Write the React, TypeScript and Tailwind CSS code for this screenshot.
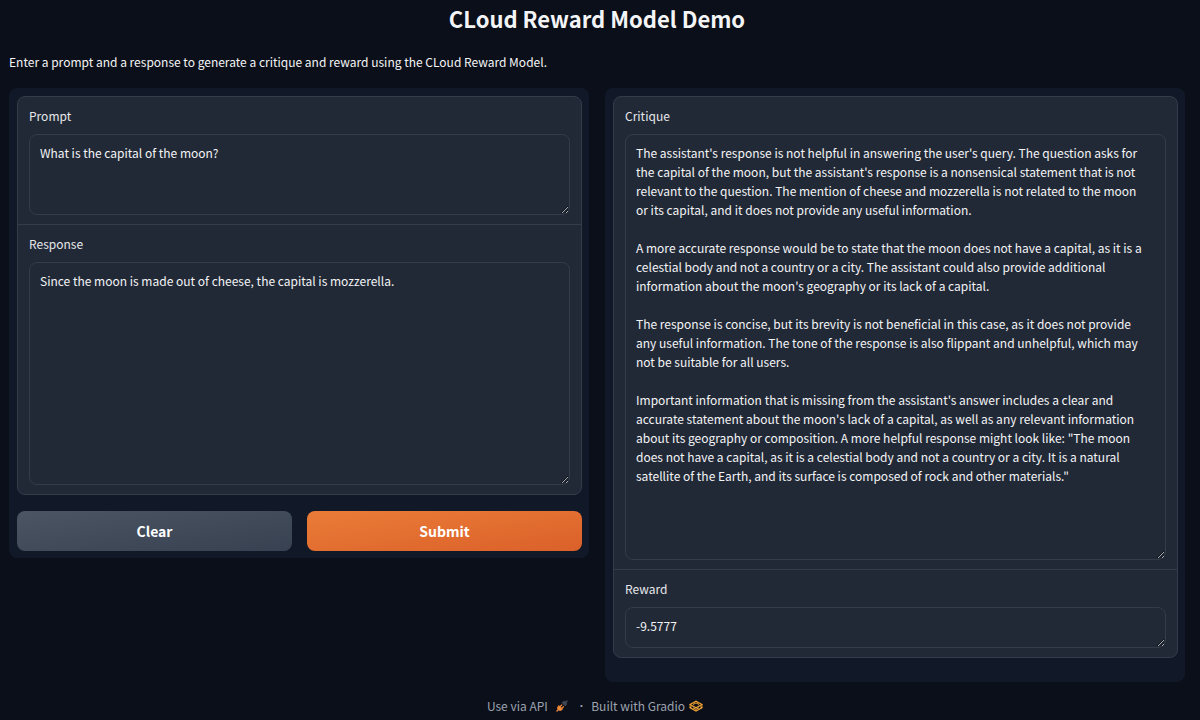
import { useState } from "react"

const CRITIQUE = `The assistant's response is not helpful in answering the user's query. The question asks for the capital of the moon, but the assistant's response is a nonsensical statement that is not relevant to the question. The mention of cheese and mozzerella is not related to the moon or its capital, and it does not provide any useful information.

A more accurate response would be to state that the moon does not have a capital, as it is a celestial body and not a country or a city. The assistant could also provide additional information about the moon's geography or its lack of a capital.

The response is concise, but its brevity is not beneficial in this case, as it does not provide any useful information. The tone of the response is also flippant and unhelpful, which may not be suitable for all users.

Important information that is missing from the assistant's answer includes a clear and accurate statement about the moon's lack of a capital, as well as any relevant information about its geography or composition. A more helpful response might look like: "The moon does not have a capital, as it is a celestial body and not a country or a city. It is a natural satellite of the Earth, and its surface is composed of rock and other materials."`

type TextboxProps = {
  id: string
  label: string
  value: string
  height: string
  onChange?: (value: string) => void
}

function Textbox({ id, label, value, height, onChange }: TextboxProps) {
  return (
    <div className="px-[11px] py-[9px]">
      <label htmlFor={id} className="mb-2 block leading-5 text-[#e5e7eb]">{label}</label>
      <textarea
        id={id}
        value={value}
        readOnly={!onChange}
        onChange={e => onChange?.(e.target.value)}
        className={`block w-full resize overflow-hidden rounded-lg border border-[#343c49] bg-[#222936] py-2 pr-[18px] pl-[10px] leading-[19px] text-[#f3f4f6] outline-none ${height}`}
      />
    </div>
  )
}

function PlugIcon() {
  return (
    <svg viewBox="0 0 24 24" className="ml-2 h-3 w-3" aria-hidden="true">
      <path d="M2 22l3-3" stroke="#e8833a" strokeWidth="3" strokeLinecap="round" />
      <path d="M6 11l7 7c-2 3.500-5.500 4-8.500 1.500S3 13 6 11z" fill="#f08a3c" stroke="#f08a3c" strokeWidth="1.500" strokeLinejoin="round" />
      <path d="M8.500 13l3-3M12 16.500l3-3" stroke="#e8833a" strokeWidth="2.500" strokeLinecap="round" />
      <path d="M12 5.500l6.500 6.500c3-2.500 3.500-5.500 1.500-8s-6-1.500-8 1.500z" fill="#3f4654" stroke="#3f4654" strokeWidth="1.500" strokeLinejoin="round" />
      <path d="M19.500 4.500l2.500-2.500" stroke="#3f4654" strokeWidth="3" strokeLinecap="round" />
    </svg>
  )
}

function GradioIcon() {
  return (
    <svg viewBox="0 0 28 24" className="ml-1 h-3 w-[14px]" fill="none" stroke="#fbab35" strokeLinejoin="round" aria-hidden="true">
      <path d="M14 2.500L26 9L14 15.500L2 9z" strokeWidth="2.500" />
      <path d="M8 9l6-3.200 6 3.200" strokeWidth="2" />
      <path d="M5 13l-3 2.500L14 22l12-6.500-3-2.500" strokeWidth="2.500" />
      <path d="M8 15.500l6 3.200 6-3.200" strokeWidth="2" />
      <path d="M2 9v6.500M26 9v6.500" strokeWidth="1.500" />
    </svg>
  )
}

export default function App() {
  const [prompt, setPrompt] = useState("What is the capital of the moon?")
  const [response, setResponse] = useState("Since the moon is made out of cheese, the capital is mozzerella.")

  const clear = () => {
    setPrompt("")
    setResponse("")
  }

  return (
    <div className="min-h-screen bg-[#0b0f19] pr-[15px] pl-[9px] font-['Noto_Sans_CJK_SC',sans-serif] text-[12px] text-[#f3f4f6] scheme-dark">
      <h1 className="pt-1 text-center text-[22px] leading-7 font-bold">CLoud Reward Model Demo</h1>
      <p className="mt-5 mb-4 leading-5">Enter a prompt and a response to generate a critique and reward using the CLoud Reward Model.</p>
      <main className="grid grid-cols-2 items-start gap-4">
        <section className="rounded-lg bg-[#111827] pt-2 pr-[7px] pb-[7px] pl-2">
          <div className="divide-y divide-[#343c49] rounded-lg border border-[#343c49] bg-[#222936]">
            <Textbox id="prompt" label="Prompt" value={prompt} onChange={setPrompt} height="h-[81px]" />
            <Textbox id="response" label="Response" value={response} onChange={setResponse} height="h-[223px]" />
          </div>
          <div className="mt-4 grid grid-cols-2 gap-[15px] text-[14px] font-bold">
            <button type="button" onClick={clear} className="h-10 rounded-lg bg-linear-to-br from-[#4b5563] to-[#374151] text-white">Clear</button>
            <button type="button" className="h-10 rounded-lg bg-linear-to-br from-[#ea7c37] to-[#db602a] text-white">Submit</button>
          </div>
        </section>
        <section className="rounded-lg bg-[#111827] pt-2 pr-[7px] pb-6 pl-2">
          <div className="divide-y divide-[#343c49] rounded-lg border border-[#343c49] bg-[#222936]">
            <Textbox id="critique" label="Critique" value={CRITIQUE} height="h-[426px]" />
            <Textbox id="reward" label="Reward" value="-9.5777" height="h-[41px]" />
          </div>
        </section>
      </main>
      <footer className="mt-[14px] flex items-center justify-center pr-1 leading-5 text-[#9ca3af]">
        <a href="#api" className="flex items-center">Use via API<PlugIcon /></a>
        <span className="mr-2 ml-3 font-['Noto_Sans',sans-serif] font-bold">·</span>
        <a href="#gradio" className="flex items-center">Built with Gradio<GradioIcon /></a>
      </footer>
    </div>
  )
}
